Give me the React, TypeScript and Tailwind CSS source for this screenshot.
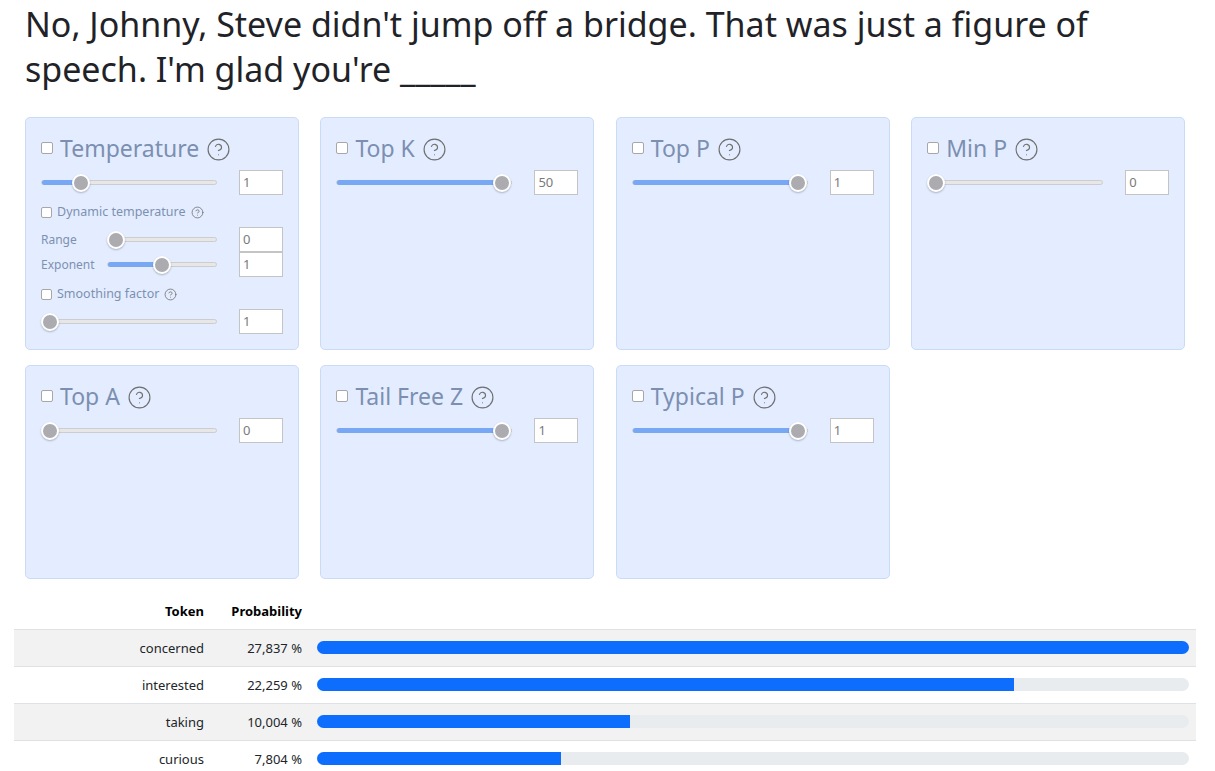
import { HelpCircle } from "lucide-react";

const Checkbox = ({ size = 12 }: { size?: number }) => (
  <span
    className="inline-block shrink-0 rounded-[2px] border border-[#a7a7a7] bg-white"
    style={{ width: size, height: size }}
  />
);

const Slider = ({ value }: { value: number }) => (
  <div className="relative h-[5px] flex-1 rounded-full border border-[#cdcdcd] bg-[#e7e7e7]">
    <div
      className="absolute left-0 top-[-1px] h-[5px] rounded-full bg-[#78a8f4]"
      style={{ width: value > 0 ? `calc(8px + ${value} * (100% - 17px))` : 0 }}
    />
    <div
      className="absolute top-1/2 h-[18px] w-[18px] -translate-y-1/2 rounded-full border-2 border-white bg-[#acacb0] shadow-[0_1px_2px_rgba(0,0,0,0.25)]"
      style={{ left: `calc(${value} * (100% - 17px) - 1px)` }}
    />
  </div>
);

const NumInput = ({ value }: { value: string }) => (
  <div className="ml-[22px] flex h-[25px] w-[44px] shrink-0 items-center border border-[#c4c4c4] bg-white pl-[3px] text-[13px] text-[#7a7a7a]">
    {value}
  </div>
);

const SliderRow = ({ value, input }: { value: number; input: string }) => (
  <div className="flex items-center">
    <Slider value={value} />
    <NumInput value={input} />
  </div>
);

const SubCheck = ({ label }: { label: string }) => (
  <div className="flex h-[16px] items-center gap-[5px] text-[12.5px] text-[#7e90b1]">
    <Checkbox size={11} />
    <span>{label}</span>
    <HelpCircle size={13} strokeWidth={1.5} className="text-[#707070]" />
  </div>
);

const LabeledRow = ({ label, value, input }: { label: string; value: number; input: string }) => (
  <div className="flex items-center">
    <span className="w-[66px] shrink-0 text-[12px] text-[#7e90b1]">{label}</span>
    <Slider value={value} />
    <NumInput value={input} />
  </div>
);

const Card = ({
  title,
  value,
  input,
  children,
}: {
  title: string;
  value: number;
  input: string;
  children?: React.ReactNode;
}) => (
  <div className="min-h-[214px] rounded-[5px] border border-[#c9dbf6] bg-[#e3edff] px-[15px] pt-[19px] pb-[15px]">
    <div className="flex h-[24px] items-end gap-[7px]">
      <span className="mb-[1px]">
        <Checkbox />
      </span>
      <span className="text-[23px] leading-[26px] text-[#7c8fb1]">{title}</span>
      <HelpCircle size={25} strokeWidth={1.1} className="mb-[-1px] text-[#6f6f6f]" />
    </div>
    <div className="mt-[9px]">
      <SliderRow value={value} input={input} />
    </div>
    {children}
  </div>
);

const rows = [
  { token: "concerned", prob: "27,837 %", pct: 100 },
  { token: "interested", prob: "22,259 %", pct: 79.96 },
  { token: "taking", prob: "10,004 %", pct: 35.94 },
  { token: "curious", prob: "7,804 %", pct: 28.03 },
];

export default function App() {
  return (
    <div className="min-h-[771px] bg-white pl-[14px] pr-[19px] font-['Noto_Sans',sans-serif] text-[#212529]">
      <div className="px-[11px]">
        <h1 className="pt-[2px] text-[34px] leading-[45px] font-normal text-[#1f2328]">
          No, Johnny, Steve didn't jump off a bridge. That was just a figure of speech. I'm glad you're _____
        </h1>

        <div className="mt-[25px] grid grid-cols-[repeat(4,274px)] gap-x-[21.4px] gap-y-[15px]">
          <Card title="Temperature" value={0.2} input="1">
            <div className="mt-[9px]">
              <SubCheck label="Dynamic temperature" />
            </div>
            <div className="mt-[7px]">
              <LabeledRow label="Range" value={0} input="0" />
            </div>
            <div>
              <LabeledRow label="Exponent" value={0.5} input="1" />
            </div>
            <div className="mt-[9px]">
              <SubCheck label="Smoothing factor" />
            </div>
            <div className="mt-[7px]">
              <SliderRow value={0} input="1" />
            </div>
          </Card>
          <Card title="Top K" value={1} input="50" />
          <Card title="Top P" value={1} input="1" />
          <Card title="Min P" value={0} input="0" />
          <Card title="Top A" value={0} input="0" />
          <Card title="Tail Free Z" value={1} input="1" />
          <Card title="Typical P" value={1} input="1" />
        </div>
      </div>

      <table className="mt-[16px] w-full border-collapse text-[13px]">
        <thead>
          <tr>
            <th className="w-[198px] py-[7px] pr-[8px] text-right font-bold text-black">Token</th>
            <th className="w-[98px] py-[7px] pr-[8px] text-right font-bold text-black">Probability</th>
            <th />
          </tr>
        </thead>
        <tbody>
          {rows.map((r, i) => (
            <tr key={r.token} className={`border-t border-[#dee2e6] ${i % 2 === 0 ? "bg-[#f2f2f2]" : "bg-white"}`}>
              <td className="py-[9px] pr-[8px] text-right leading-[18px]">{r.token}</td>
              <td className="py-[9px] pr-[8px] text-right leading-[18px]">{r.prob}</td>
              <td className="py-[9px] pr-[7px] pl-[7px]">
                <div className="h-[13px] w-full overflow-hidden rounded-full bg-[#e9ecef]">
                  <div className="h-full bg-[#0d6efd]" style={{ width: `${r.pct}%` }} />
                </div>
              </td>
            </tr>
          ))}
        </tbody>
      </table>
    </div>
  );
}
